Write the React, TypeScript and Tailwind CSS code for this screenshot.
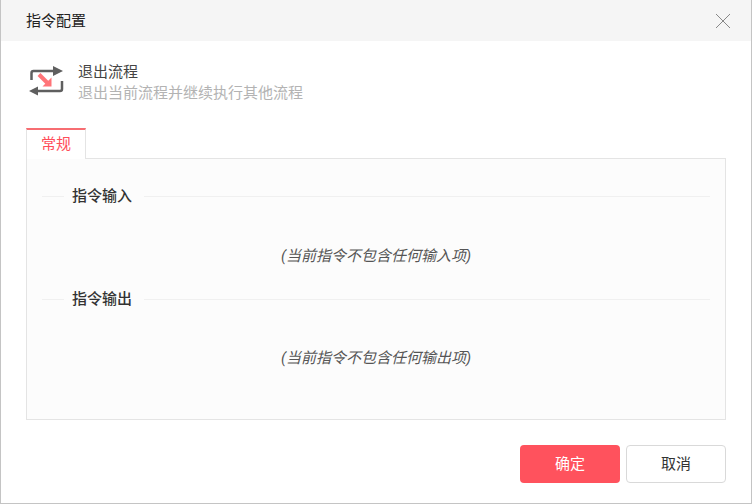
const font = "font-['Roboto','Noto_Sans_CJK_SC',sans-serif]";

function FlowIcon() {
  return (
    <svg width="36" height="32" viewBox="0 0 36 32" fill="none">
      <path d="M25 6H5.500a2 2 0 0 0-2 2V15" stroke="#5f5f5f" strokeWidth="2.500" />
      <path d="M25 1l10 5-10 5z" fill="#5f5f5f" />
      <path d="M10 26h22a2 2 0 0 0 2-2V16" stroke="#5f5f5f" strokeWidth="2.500" />
      <path d="M10 21.500L1 26l9 4.500z" fill="#5f5f5f" />
      <path d="M11 9.500l9 9" stroke="#ff7478" strokeWidth="4" />
      <path d="M23.500 12.500v9h-9z" fill="#ff7478" />
    </svg>
  );
}

function SectionTitle({ children }: { children: string }) {
  return (
    <div className="flex items-center h-5">
      <div className="w-[22px] h-px bg-[#f0f0f0]" />
      <span className="px-2 pt-px text-[15px] font-medium text-[#333]">{children}</span>
      <div className="flex-1 h-px bg-[#f0f0f0] ml-[4px]" />
    </div>
  );
}

export default function App() {
  return (
    <div className={`${font} w-[752px] h-[504px] bg-white border-x border-b border-[#c4c4c4] flex flex-col`}>
      {/* Header */}
      <div className="h-[41px] shrink-0 bg-[#f5f5f5] pl-[25px] pr-5 flex items-center justify-between">
        <span className="pt-px text-[15px] text-[#222]">指令配置</span>
        <svg width="16" height="16" viewBox="0 0 16 16" fill="none">
          <path d="M1 1l14 14M15 1L1 15" stroke="#888" strokeWidth="1" />
        </svg>
      </div>

      <div className="flex-1 flex flex-col px-[25px]">
        {/* Command info */}
        <div className="flex items-center gap-[14px] mt-[21px] h-[42px]">
          <div className="w-[38px] flex justify-end -mt-1">
            <FlowIcon />
          </div>
          <div className="flex flex-col">
            <span className="text-[15px] leading-[21px] text-[#444]">退出流程</span>
            <span className="text-[15px] leading-[21px] text-[#b3b3b3]">退出当前流程并继续执行其他流程</span>
          </div>
        </div>

        {/* Tab */}
        <div className="flex mt-[24px] h-[31px] border-b border-[#e4e4e4]">
          <div className="w-[60px] h-[31px] border-t-2 border-x border-x-[#e4e4e4] border-t-[#f76d72] bg-white text-[15px] text-[#ff4d5a] flex items-center justify-center">
            常规
          </div>
        </div>

        {/* Tab body */}
        <div className="h-[261px] border-x border-b border-[#e4e4e4] bg-[#fcfcfc] px-[15px] pt-[27px]">
          <SectionTitle>指令输入</SectionTitle>
          <div className="h-[83px] pt-[17px] flex items-center justify-center text-[15px] italic text-[#555]">
            (当前指令不包含任何输入项)
          </div>
          <SectionTitle>指令输出</SectionTitle>
          <div className="h-[83px] pt-4 flex items-center justify-center text-[15px] italic text-[#555]">
            (当前指令不包含任何输出项)
          </div>
        </div>

        {/* Footer */}
        <div className="flex justify-end gap-1.5 mt-[25px]">
          <button className="w-[100px] h-[38px] rounded bg-[#ff525d] text-[15px] text-white">确定</button>
          <button className="w-[100px] h-[38px] rounded border border-[#d9d9d9] bg-white text-[15px] text-[#333]">取消</button>
        </div>
      </div>
    </div>
  );
}
